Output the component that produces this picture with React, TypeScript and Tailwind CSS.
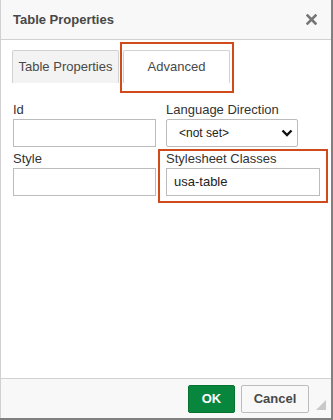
const font = { fontFamily: '"Liberation Sans", Arial, sans-serif' }

function Field({ label, children }: { label: string; children: React.ReactNode }) {
  return (
    <div className="flex flex-col">
      <div className="text-[13px] leading-[16px] text-[#333] mb-[1px]">{label}</div>
      {children}
    </div>
  )
}

export default function App() {
  return (
    <div className="w-[333px] h-[420px] bg-[#808080] overflow-hidden" style={font}>
      <div className="w-[331px] h-[418px] bg-white flex flex-col border-l border-[#d1d1d1]">
        <div className="h-[40px] shrink-0 bg-[#f8f8f8] border-b border-[#d1d1d1] flex items-center justify-between pl-[12px] pr-[14px]">
          <span className="text-[13px] font-bold text-[#484848]">Table Properties</span>
          <svg width="11" height="11" viewBox="0 0 11 11">
            <path d="M1.5 1.5 L9.5 9.5 M9.5 1.5 L1.5 9.5" stroke="#777" strokeWidth="2.6" strokeLinecap="square" />
          </svg>
        </div>
        <div className="flex-1 flex flex-col relative">
          <div className="flex items-end pt-[10px] pl-[11px] gap-[4px]">
            <div className="w-[107px] h-[33px] bg-[#f3f3f3] border border-[#d1d1d1] border-b-0 rounded-t-[2px] flex items-center justify-center text-[13px] text-[#484848]">
              Table Properties
            </div>
            <div className="w-[107px] h-[33px] bg-white border border-[#d1d1d1] border-b-0 rounded-t-[2px] flex items-center justify-center text-[13px] text-[#484848]">
              Advanced
            </div>
          </div>
          <div className="absolute left-[119px] top-[2px] w-[114px] h-[51px] border-2 border-[#d04a1c]" />
          <div className="grid grid-cols-[143px_154px] gap-x-[10px] pl-[12px] pt-[19px] gap-y-[4px]">
            <Field label="Id">
              <div className="h-[28px] border border-[#bcbcbc] bg-white" />
            </Field>
            <Field label="Language Direction">
              <div className="w-[132px] h-[28px] border border-[#bcbcbc] rounded-[2px] bg-white flex items-center justify-between pl-[12px] pr-[4px]">
                <span className="text-[12px] text-[#222]">&lt;not set&gt;</span>
                <svg width="12" height="8" viewBox="0 0 12 8">
                  <path d="M1.5 1.5 L6 6 L10.5 1.5" stroke="#111" strokeWidth="2.4" fill="none" />
                </svg>
              </div>
            </Field>
            <Field label="Style">
              <div className="h-[28px] border border-[#bcbcbc] bg-white" />
            </Field>
            <div className="relative">
              <div className="absolute -left-[8px] -top-[2px] w-[170px] h-[54px] border-2 border-[#d04a1c]" />
              <Field label="Stylesheet Classes">
                <div className="h-[28px] border border-[#bcbcbc] bg-white flex items-center pl-[7px] text-[13px] text-[#222]">
                  usa-table
                </div>
              </Field>
            </div>
          </div>
        </div>
        <div className="h-[40px] shrink-0 bg-[#f8f8f8] border-t border-[#d1d1d1] flex items-start justify-end pr-[22px] pt-[6px] gap-[6px] relative">
          <button className="w-[47px] h-[28px] bg-[#09863e] border border-[#07732f] rounded-[2px] text-white text-[13px] font-bold">OK</button>
          <button className="w-[68px] h-[28px] bg-[#f8f8f8] border border-[#bcbcbc] rounded-[2px] text-[#484848] text-[13px] font-bold">Cancel</button>
          <svg className="absolute right-[5px] bottom-[8px]" width="10" height="10" viewBox="0 0 10 10">
            <path d="M10 0 L10 10 L0 10 Z" fill="#c8c8c8" />
          </svg>
        </div>
      </div>
    </div>
  )
}
